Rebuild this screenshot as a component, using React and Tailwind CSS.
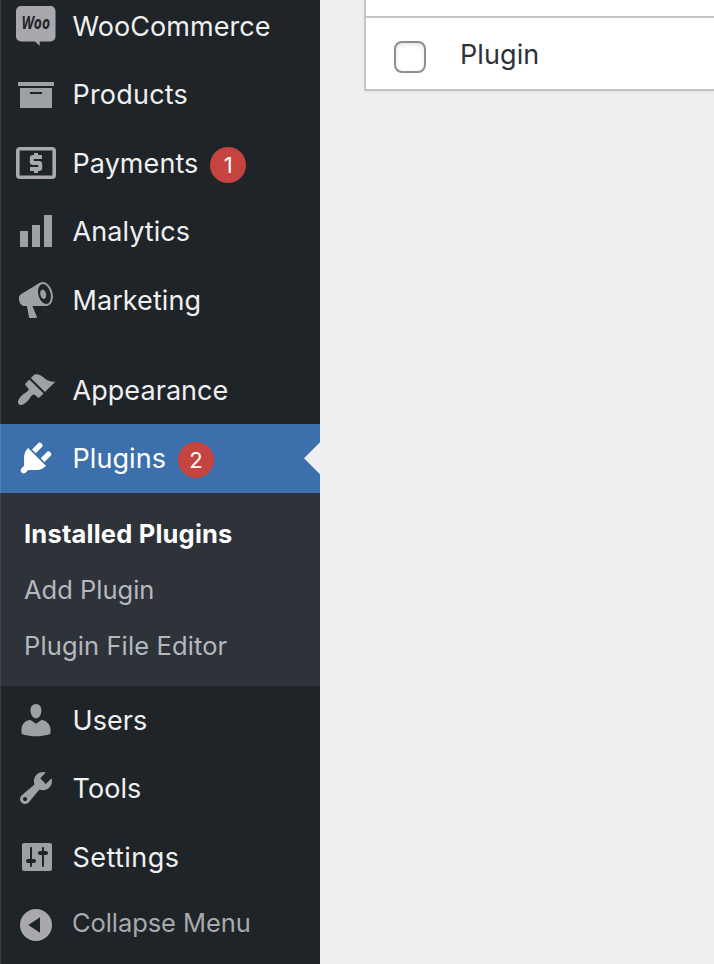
import React from 'react';
import clsx from 'clsx';

const ICONS = {
  products: 'M19 4v2H1V4h18zM2 7h16v10H2V7zm11 3V9H7v1h6z',
  analytics: 'M18 18V2h-4v16h4zM12 18V7H8v11h4zM6 18v-8H2v8h4z',
  marketing:
    'M18.15 5.94c.46 1.62.38 3.22-.02 4.48-.42 1.28-1.26 2.18-2.3 2.48-.16.06-.26.06-.4.06-.06.02-.12.02-.18.02-.06.02-.14.02-.22.02h-6.8l2.22 5.5c.02.14-.06.26-.14.34-.08.1-.24.16-.34.16H6.95c-.1 0-.26-.06-.34-.16-.08-.08-.16-.2-.14-.34l-1-5.5H4.25l-.02-.02c-.5.06-1.08-.18-1.54-.62s-.88-1.08-1.06-1.88c-.24-.8-.2-1.56-.02-2.2.18-.62.58-1.08 1.06-1.3l.02-.02 9-5.4c.1-.06.18-.1.24-.16.06-.04.14-.08.24-.12.16-.08.28-.12.5-.18 1.04-.3 2.24.1 3.22.98s1.84 2.24 2.26 3.86zm-2.58 5.98h-.02c.4-.1.74-.34 1.04-.7.58-.7.86-1.76.86-3.04 0-.64-.1-1.3-.28-1.98-.34-1.36-1.02-2.5-1.78-3.24s-1.68-1.1-2.46-.88c-.82.22-1.4.96-1.7 2-.32 1.04-.28 2.36.06 3.72.38 1.36 1 2.5 1.8 3.24.78.74 1.62 1.1 2.48.88zm-2.54-7.08c.22-.04.42-.02.62.04.38.16.76.48 1.02 1s.42 1.2.42 1.78c0 .3-.04.56-.12.8-.18.48-.44.84-.86.94-.34.1-.8-.06-1.14-.4s-.64-.86-.78-1.5c-.18-.62-.12-1.24.02-1.72s.48-.84.82-.94z',
  appearance:
    'M14.48 11.06L7.41 3.99l1.5-1.5c.5-.56 2.3-.47 3.51.32 1.21.8 1.43 1.28 2.91 2.1 1.18.64 2.45 1.26 4.45.85zm-.71.71L6.7 4.7 4.93 6.47c-.39.39-.39 1.02 0 1.41l1.06 1.06c.39.39.39 1.03 0 1.42-.6.6-1.43 1.11-2.21 1.69-.35.26-.7.53-1.01.84C1.43 14.23.4 16.08 1.4 17.07c.99 1 2.84-.03 4.18-1.36.31-.31.58-.66.85-1.02.57-.78 1.08-1.61 1.69-2.21.39-.39 1.02-.39 1.41 0l1.06 1.06c.39.39 1.02.39 1.41 0z',
  plugins:
    'M13.11 4.36L9.87 7.6 8 5.73l3.24-3.24c.35-.34 1.05-.2 1.56.32.52.51.66 1.21.31 1.55zm-8 1.77l.91-1.12 9.01 9.01-1.19.84c-.71.71-2.63 1.16-3.82 1.16H6.14L4.9 17.26c-.59.59-1.54.59-2.12 0-.59-.58-.59-1.53 0-2.12l1.24-1.24v-3.88c0-1.13.4-3.19 1.09-3.89zm7.26 3.97l3.24-3.24c.34-.35 1.04-.21 1.55.31.52.51.66 1.21.31 1.55l-3.24 3.25z',
  users:
    'M10 9.25c-2.27 0-2.73-3.44-2.73-3.44C7 4.02 7.82 2 9.97 2c2.16 0 2.98 2.02 2.71 3.81 0 0-.41 3.44-2.68 3.44zm0 2.57L12.72 10c2.39 0 4.52 2.33 4.52 4.53v2.49s-3.65 1.13-7.24 1.13c-3.65 0-7.24-1.13-7.24-1.13v-2.49c0-2.25 1.94-4.48 4.47-4.48z',
  tools:
    'M16.68 9.77c-1.34 1.34-3.3 1.67-4.95.99l-5.41 6.52c-.99.99-2.59.99-3.58 0s-.99-2.59 0-3.57l6.52-5.42c-.68-1.65-.35-3.61.99-4.95 1.28-1.28 3.12-1.62 4.72-1.06l-2.89 2.89 2.82 2.82 2.86-2.87c.53 1.58.18 3.39-1.08 4.65zM3.81 16.21c.4.39 1.04.39 1.43 0 .4-.4.4-1.04 0-1.43-.39-.4-1.03-.4-1.43 0-.39.39-.39 1.03 0 1.43z',
  settings:
    'M18 16V4c0-.55-.45-1-1-1H4c-.55 0-1 .45-1 1v12c0 .55.45 1 1 1h13c.55 0 1-.45 1-1zM8 11h1c.55 0 1 .45 1 1s-.45 1-1 1H8v1.5c0 .28-.22.5-.5.5s-.5-.22-.5-.5V13H6c-.55 0-1-.45-1-1s.45-1 1-1h1V5.5c0-.28.22-.5.5-.5s.5.22.5.5V11zm5-2h-1c-.55 0-1-.45-1-1s.45-1 1-1h1V5.5c0-.28.22-.5.5-.5s.5.22.5.5V7h1c.55 0 1 .45 1 1s-.45 1-1 1h-1v5.5c0 .28-.22.5-.5.5s-.5-.22-.5-.5V9z',
};

const WooIcon = () => (
  <svg viewBox="0 0 40 40" className="size-10 shrink-0">
    <path
      fill="#a9a9ad"
      d="M5 0h29.500a5 5 0 0 1 5 5v25.500a5 5 0 0 1-5 5H23.700V39.700L19 35.500H5a5 5 0 0 1-5-5V5a5 5 0 0 1 5-5z"
    />
    <text
      x="5.500"
      y="23.300"
      textLength="28.500"
      lengthAdjust="spacingAndGlyphs"
      fill="#1f2428"
      fontSize="17"
      fontWeight="700"
      fontStyle="italic"
      fontFamily="Open Sans, sans-serif"
    >
      Woo
    </text>
  </svg>
);

const PaymentsIcon = () => (
  <svg viewBox="0 0 40 40" className="size-10 shrink-0" fill="none" stroke="#a9a9ad">
    <rect x="1.800" y="5.800" width="36.400" height="28.400" rx="2" strokeWidth="3.600" />
    <path
      d="M26 14H17a1.200 1.200 0 0 0-1.200 1.200v3.600a1.200 1.200 0 0 0 1.200 1.200h6a1.200 1.200 0 0 1 1.200 1.200v3.600a1.200 1.200 0 0 1-1.200 1.200H14"
      strokeWidth="4"
    />
    <path d="M20 10v4M20 26v4" strokeWidth="4" />
  </svg>
);

const CollapseIcon = () => (
  <svg viewBox="0 0 40 40" className="size-10 shrink-0">
    <circle cx="20" cy="20" r="16" fill="#a9a9ad" />
    <path d="M12.300 20L24 12.300v15.400z" fill="#1f2428" />
  </svg>
);

const MenuIcon = ({ name }) => {
  if (name === 'woo') return <WooIcon />;
  if (name === 'payments') return <PaymentsIcon />;
  return (
    <svg viewBox="0 0 20 20" className="size-10 shrink-0" fill="currentColor">
      <path fillRule="evenodd" d={ICONS[name]} />
    </svg>
  );
};

const MenuItem = ({ icon, label, count, current, tracking = 'tracking-[0.06px]' }) => (
  <li
    className={clsx(
      'relative flex h-[68.4px] items-start pl-4',
      current ? 'bg-[#3c70ac] text-white' : 'text-[#9ca1a5]'
    )}
  >
    <div className="pt-3.5">
      <MenuIcon name={icon} />
    </div>
    <span
      className={clsx(
        'ml-[16.5px] pt-[17px] text-[27px] leading-[36px]',
        tracking,
        current ? 'text-white' : 'text-[#f0f0f1]'
      )}
    >
      {label}
    </span>
    {count && (
      <span className="ml-3 mt-[18px] flex size-9 items-center justify-center rounded-full bg-[#c54440] text-[22px] leading-none text-white">
        {count}
      </span>
    )}
    {current && (
      <span className="absolute right-0 top-[18px] h-8 w-4 bg-[#efeff0] [clip-path:polygon(100%_0,0_50%,100%_100%)]" />
    )}
  </li>
);

const Sidebar = () => (
  <nav className="relative w-80 shrink-0 overflow-hidden bg-[#1f2428]">
    <ul className="-mt-2">
      <MenuItem icon="woo" label="WooCommerce" />
      <MenuItem icon="products" label="Products" tracking="tracking-[0.2px]" />
      <MenuItem icon="payments" label="Payments" count={1} />
      <MenuItem icon="analytics" label="Analytics" />
      <MenuItem icon="marketing" label="Marketing" />
      <li className="h-[22px]" />
      <MenuItem icon="appearance" label="Appearance" />
      <MenuItem icon="plugins" label="Plugins" count={2} current />
    </ul>

    {/* Plugins submenu */}
    <ul className="h-[193px] bg-[#2e3239] pl-6 pt-[13.200px] text-[25.500px] leading-[56px] text-[#b4b9be]">
      <li className="font-bold tracking-[0.2px] text-white">Installed Plugins</li>
      <li>Add Plugin</li>
      <li className="tracking-[0.12px]">Plugin File Editor</li>
    </ul>

    <ul>
      <MenuItem icon="users" label="Users" />
      <MenuItem icon="tools" label="Tools" />
      <MenuItem icon="settings" label="Settings" tracking="tracking-[0.45px]" />
    </ul>
    <button className="flex items-start pl-4 pt-[13.700px] text-[25.500px] leading-[36px] text-[#a9a9ad]">
      <CollapseIcon />
      <span className="ml-4 tracking-[-0.08px]">Collapse Menu</span>
    </button>
    <div className="absolute inset-y-0 left-0 w-px bg-white/10" />
  </nav>
);

const App = () => (
  <div className="flex h-[964px] w-[714px] overflow-hidden bg-[#efeff0] font-['Inter',sans-serif]">
    <Sidebar />
    <main className="min-w-0 flex-1 pl-11">
      {/* Bottom of the plugins table */}
      <div className="h-[91px] border-b-2 border-l-2 border-[#c3c3c9] bg-white shadow-[0_2px_2px_rgba(0,0,0,0.04)]">
        <div className="h-[18px] border-b-2 border-[#c3c3c9]" />
        <div className="flex items-start pl-7">
          <div className="mt-[23px] size-8 rounded-lg border-2 border-[#8e8e93] bg-white shadow-[inset_0_2px_4px_rgba(0,0,0,0.1)]" />
          <span className="ml-[34px] mt-[19px] text-[27px] leading-[36px] tracking-[0.1px] text-[#2e3239]">
            Plugin
          </span>
        </div>
      </div>
    </main>
  </div>
);

export default App;
